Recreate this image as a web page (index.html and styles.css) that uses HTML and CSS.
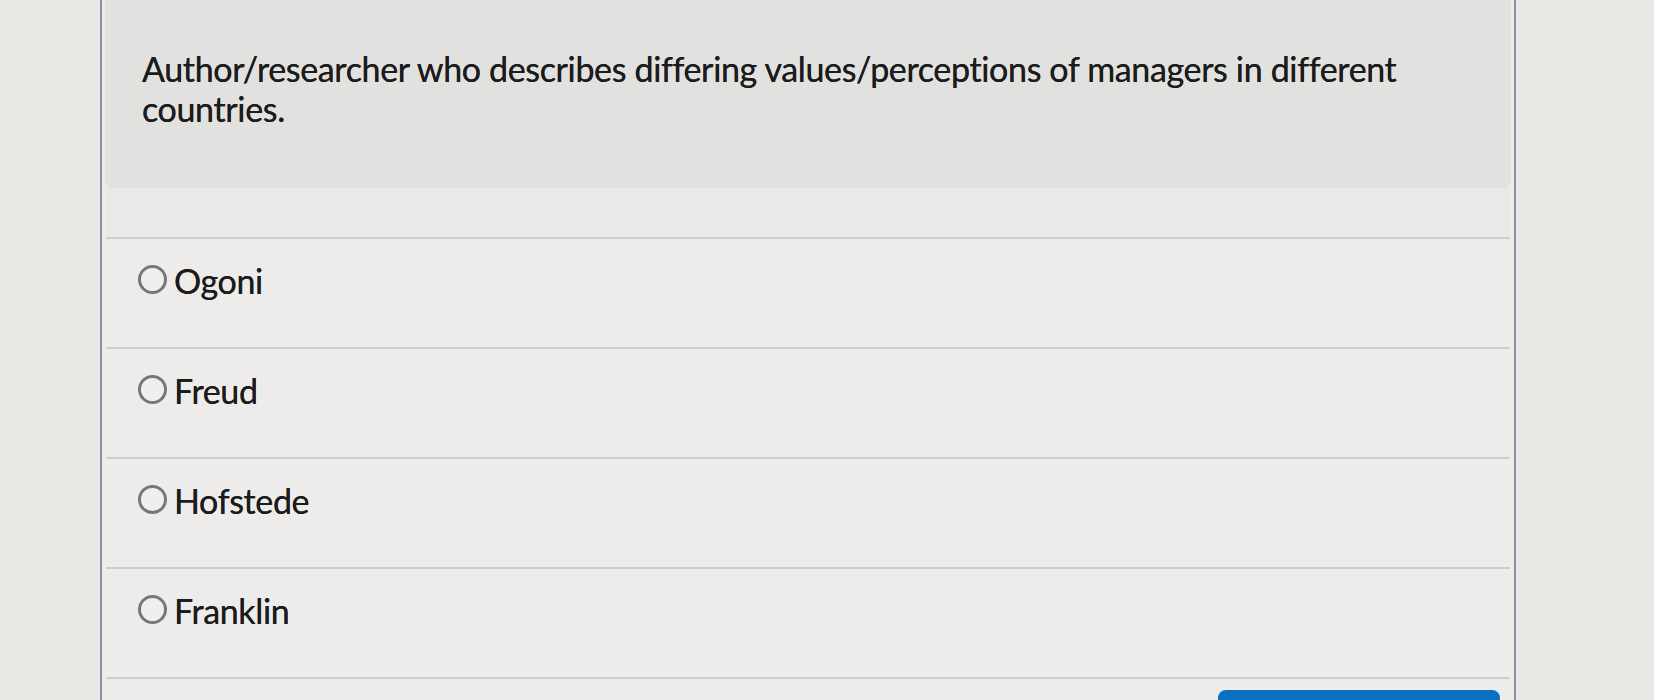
FILE: index.html
```html
<!DOCTYPE html>
<html lang="en">
<head>
<meta charset="utf-8">
<title>Quiz question</title>
<link rel="stylesheet" href="styles.css">
</head>
<body>
  <div class="panel">
    <div class="question-header">
      <p class="question-text">Author/researcher who describes differing values/perceptions of managers in different countries.</p>
    </div>
    <div class="band"></div>
    <ul class="answers">
      <li class="answer"><span class="radio"></span><span class="label">Ogoni</span></li>
      <li class="answer"><span class="radio"></span><span class="label">Freud</span></li>
      <li class="answer"><span class="radio"></span><span class="label">Hofstede</span></li>
      <li class="answer"><span class="radio"></span><span class="label">Franklin</span></li>
    </ul>
    <div class="footer">
      <button class="next-btn" type="button"></button>
    </div>
  </div>
</body>
</html>
```
FILE: styles.css
```css
html, body {
  margin: 0;
  padding: 0;
  background: #e7e7e4;
  height: 700px;
  overflow: hidden;
}

body {
  font-family: "Lato", "Noto Sans", sans-serif;
  color: #1c1c1c;
}

.panel {
  margin-left: 100px;
  width: 1412px;
  height: 700px;
  overflow: hidden;
  border-left: 2px solid #8a8fae;
  border-right: 2px solid #8a8fae;
  background: #edecea;
  display: flex;
  flex-direction: column;
}

.question-header {
  margin: 0 3px;
  height: 188px;
  flex: none;
  background: #e1e1df;
  border-radius: 0 0 8px 8px;
  box-sizing: border-box;
  padding: 49px 40px 0 37px;
}

.question-text {
  margin: 0;
  font-size: 34px;
  line-height: 40px;
  font-weight: 400;
  letter-spacing: -0.35px;
  text-shadow: 0 0 0.4px #1c1c1c;
}

.band {
  height: 49px;
  flex: none;
  margin: 0 4px;
  background: #e9e9e7;
  border-bottom: 2px solid #cdcdcb;
}

.answers {
  list-style: none;
  margin: 0 4px;
  padding: 0;
}

.answer {
  height: 110px;
  box-sizing: border-box;
  border-bottom: 2px solid #cdcdcb;
  display: flex;
  align-items: flex-start;
  padding: 22px 0 0 32px;
  background: #edecea;
}

.radio {
  width: 23px;
  height: 23px;
  border: 3px solid #777777;
  border-radius: 50%;
  margin-top: 4px;
  margin-right: 7px;
  flex: none;
  background: #efefed;
}

.label {
  font-size: 34px;
  line-height: 40px;
  letter-spacing: -0.35px;
  color: #1c1c1c;
  text-shadow: 0 0 0.4px #1c1c1c;
}

.footer {
  display: flex;
  justify-content: flex-end;
  padding: 11px 14px 0 0;
}

.next-btn {
  width: 282px;
  height: 10px;
  border: none;
  border-radius: 8px 8px 0 0;
  background: #0a70c2;
  padding: 0;
}
```
